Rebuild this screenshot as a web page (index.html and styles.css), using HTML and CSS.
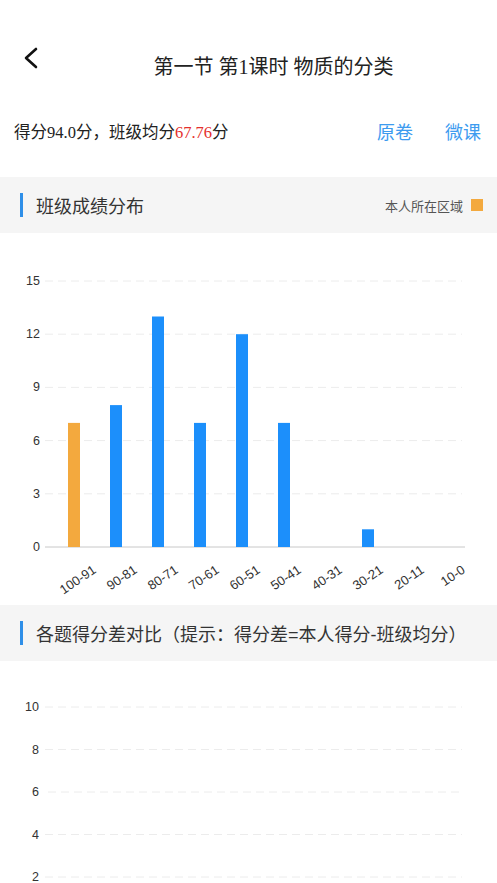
FILE: index.html
```html
<!DOCTYPE html>
<html lang="zh-CN">
<head>
  <meta charset="UTF-8">
  <meta name="viewport" content="width=device-width, initial-scale=1.0">
  <title>成绩分析</title>
  <link rel="stylesheet" href="styles.css">
</head>
<body>
  <div class="nav">
    <div class="back">
      <svg width="14" height="22" viewBox="0 0 14 22">
        <polyline points="12,2 2,11 12,20" fill="none" stroke="#111" stroke-width="2.6" stroke-linecap="round" stroke-linejoin="round"/>
      </svg>
    </div>
    <div class="nav-title">第一节 第1课时 物质的分类</div>
  </div>

  <div class="score-row">
    <div class="score">得分94.0分，班级均分<span class="avg">67.76</span>分</div>
    <div class="links">
      <a class="link">原卷</a>
      <a class="link">微课</a>
    </div>
  </div>

  <div class="section-head">
    <span class="mark"></span>
    <span class="section-title">班级成绩分布</span>
    <span class="legend">本人所在区域<span class="legend-box"></span></span>
  </div>

  <svg class="chart chart-dist" width="497" height="372" viewBox="0 232 497 372">
    <g class="grid">
      <line x1="45" y1="280" x2="462" y2="280"/>
      <line x1="45" y1="333.2" x2="462" y2="333.2"/>
      <line x1="45" y1="386.4" x2="462" y2="386.4"/>
      <line x1="45" y1="439.6" x2="462" y2="439.6"/>
      <line x1="45" y1="492.8" x2="462" y2="492.8"/>
    </g>
    <line class="axis" x1="45" y1="546" x2="465" y2="546"/>
    <g class="ylabels">
      <text x="40" y="280">15</text>
      <text x="40" y="333.2">12</text>
      <text x="40" y="386.4">9</text>
      <text x="40" y="439.6">6</text>
      <text x="40" y="492.8">3</text>
      <text x="40" y="546">0</text>
    </g>
    <g class="bars">
      <rect class="mine" x="68" y="421.9" width="12" height="124.1"/>
      <rect x="110" y="404.1" width="12" height="141.9"/>
      <rect x="152" y="315.5" width="12" height="230.5"/>
      <rect x="194" y="421.9" width="12" height="124.1"/>
      <rect x="236" y="333.2" width="12" height="212.8"/>
      <rect x="278" y="421.9" width="12" height="124.1"/>
      <rect x="362" y="528.3" width="12" height="17.7"/>
    </g>
    <g class="xlabels">
      <text transform="translate(97 571) rotate(-34)">100-91</text>
      <text transform="translate(138 571) rotate(-34)">90-81</text>
      <text transform="translate(179 571) rotate(-34)">80-71</text>
      <text transform="translate(220 571) rotate(-34)">70-61</text>
      <text transform="translate(261 571) rotate(-34)">60-51</text>
      <text transform="translate(302 571) rotate(-34)">50-41</text>
      <text transform="translate(343 571) rotate(-34)">40-31</text>
      <text transform="translate(384 571) rotate(-34)">30-21</text>
      <text transform="translate(425 571) rotate(-34)">20-11</text>
      <text transform="translate(466 571) rotate(-34)">10-0</text>
    </g>
  </svg>

  <div class="section-head">
    <span class="mark"></span>
    <span class="section-title">各题得分差对比（提示：得分差=本人得分-班级均分）</span>
  </div>

  <svg class="chart chart-diff" width="497" height="240" viewBox="0 660 497 240">
    <g class="grid">
      <line x1="45" y1="706" x2="462" y2="706"/>
      <line x1="45" y1="748.5" x2="462" y2="748.5"/>
      <line x1="48" y1="791" x2="462" y2="791"/>
      <line x1="45" y1="833.5" x2="462" y2="833.5"/>
      <line x1="45" y1="876" x2="462" y2="876"/>
    </g>
    <g class="ylabels">
      <text x="39" y="706">10</text>
      <text x="39" y="748.5">8</text>
      <text x="39" y="791">6</text>
      <text x="39" y="833.5">4</text>
      <text x="39" y="876">2</text>
    </g>
  </svg>
</body>
</html>
```

FILE: styles.css
```css
body {
  margin: 0;
  background: #fff;
  color: #333;
  font-family: "Liberation Sans", "Noto Sans CJK SC", sans-serif;
}
.nav {
  display: flex;
  height: 72px;
  padding-top: 40px;
}
.back {
  width: 50px;
  padding-top: 7px;
  padding-left: 24px;
  box-sizing: border-box;
}
.back svg {
  display: block;
}
.nav-title {
  flex: 1;
  text-align: center;
  font-family: "Liberation Serif", "Noto Sans CJK SC", serif;
  font-size: 20px;
  line-height: 54px;
  color: #222;
}
.score-row {
  display: flex;
  justify-content: space-between;
  align-items: center;
  height: 38px;
  padding: 0 16px 0 14px;
  margin-bottom: 27px;
}
.score {
  font-family: "Liberation Serif", "Noto Sans CJK SC", serif;
  font-size: 16.5px;
  color: #222;
}
.avg {
  color: #e5302d;
}
.links {
  display: flex;
  gap: 32px;
}
.link {
  font-size: 18px;
  color: #3d9bef;
}
.section-head {
  display: flex;
  align-items: center;
  height: 56px;
  background: #f5f5f5;
  padding: 0 14px 0 20px;
}
.mark {
  width: 3px;
  height: 24px;
  background: #2f8fe8;
  margin-right: 13px;
}
.section-title {
  flex: 1;
  font-size: 18px;
  color: #333;
}
.legend {
  display: flex;
  align-items: center;
  font-size: 13px;
  color: #555;
}
.legend-box {
  width: 12px;
  height: 12px;
  background: #f3a93e;
  margin-left: 8px;
}
.chart {
  display: block;
}
.grid line {
  stroke: #ececec;
  stroke-width: 1;
  stroke-dasharray: 8 5;
}
.axis {
  stroke: #c8c8c8;
  stroke-width: 1;
}
.ylabels text {
  font-family: "Liberation Sans", sans-serif;
  font-size: 12.5px;
  fill: #333;
  text-anchor: end;
  dominant-baseline: central;
}
.bars rect {
  fill: #1c8ffb;
}
.bars rect.mine {
  fill: #f3a93e;
}
.xlabels text {
  font-family: "Liberation Sans", sans-serif;
  font-size: 13px;
  fill: #333;
  text-anchor: end;
}
```
